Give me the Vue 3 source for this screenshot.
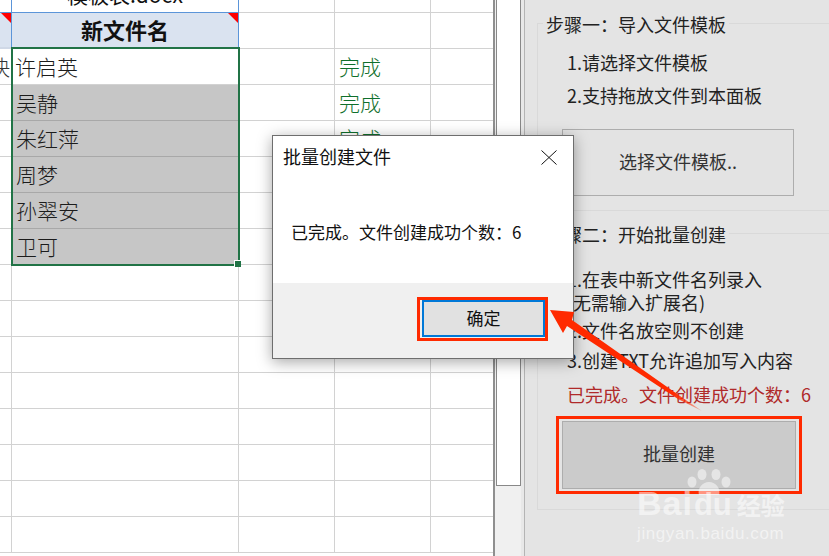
<script setup>
const rows = Array.from({ length: 16 }, (_, i) => i)
const names = { 2: '许启英', 3: '吴静', 4: '朱红萍', 5: '周梦', 6: '孙翠安', 7: '卫可' }
const done = [2, 3, 4, 5, 6, 7]
function rowClass(r) {
  return { first: r === 0, head: r === 1, picked: r >= 3 && r <= 7, last: r === 7 }
}
</script>

<template>
  <div class="screen">
    <div class="sheet">
      <template v-for="r in rows" :key="r">
        <div class="cell c0" :class="rowClass(r)">
          <span v-if="r === 2" class="clipped">快</span>
          <i v-if="r === 1" class="flag"></i>
        </div>
        <div class="cell c1" :class="rowClass(r)">
          <span v-if="r === 0" class="fname">模板表.docx</span>
          <span v-else-if="r === 1" class="title">新文件名</span>
          <span v-else-if="names[r]" class="name">{{ names[r] }}</span>
          <i v-if="r === 1" class="flag"></i>
        </div>
        <div class="cell c2"></div>
        <div class="cell c3"><span v-if="done.includes(r)" class="ok">完成</span></div>
        <div class="cell c4"></div>
      </template>
      <div class="selection"><i class="handle"></i></div>
    </div>

    <div class="scrollbar"><div class="thumb"></div></div>

    <aside class="panel">
      <section class="group one">
        <h3 class="legend">步骤一：导入文件模板</h3>
        <ul class="steps">
          <li>1.请选择文件模板</li>
          <li>2.支持拖放文件到本面板</li>
        </ul>
        <button class="pick">选择文件模板..</button>
      </section>
      <section class="group two">
        <h3 class="legend">步骤二：开始批量创建</h3>
        <p class="wrap">1.在表中新文件名列录入<br />(无需输入扩展名)</p>
        <p class="line l2">2.文件名放空则不创建</p>
        <p class="line">3.创建TXT允许追加写入内容</p>
        <p class="line result">已完成。文件创建成功个数：6</p>
        <div class="mark">
          <button class="create">批量创建</button>
        </div>
      </section>
    </aside>

    <div class="dialog">
      <header class="d-title">
        <span>批量创建文件</span>
        <svg class="close" width="16" height="15" viewBox="0 0 16 15">
          <path d="M0.5 0.5 L15.5 14.5 M15.5 0.5 L0.5 14.5" stroke="#111" stroke-width="1" fill="none" />
        </svg>
      </header>
      <div class="d-body">已完成。文件创建成功个数：6</div>
      <footer class="d-foot">
        <div class="d-mark"><button class="ok-btn">确定</button></div>
      </footer>
    </div>

    <svg class="arrow" width="829" height="556" viewBox="0 0 829 556">
      <defs>
        <linearGradient id="tail" x1="550" y1="310" x2="702" y2="411" gradientUnits="userSpaceOnUse">
          <stop offset="0.82" stop-color="#ff2a00" />
          <stop offset="1" stop-color="#ff2a00" stop-opacity="0.25" />
        </linearGradient>
      </defs>
      <polygon points="550,310 574,312 572,320 680,396 702,411 678,399 567,326 563,333" fill="url(#tail)" />
    </svg>

    <div class="baidu">
      <svg class="paw" width="44" height="26" viewBox="0 0 44 26">
        <g fill="#fff" fill-opacity="0.5">
          <ellipse cx="5" cy="13" rx="4.5" ry="5.5" />
          <ellipse cx="15" cy="5.5" rx="4.5" ry="5.5" />
          <ellipse cx="29" cy="5.5" rx="4.5" ry="5.5" />
          <ellipse cx="39" cy="13" rx="4.5" ry="5.5" />
          <path d="M22 13 C15 13 10 20 12 26 L32 26 C34 20 29 13 22 13 Z" />
        </g>
      </svg>
      <div class="b-main"><span class="bai">Bai</span><span class="du">du</span><span class="jy">经验</span></div>
      <div class="b-url">jingyan.baidu.com</div>
    </div>
  </div>
</template>

<style>
html, body { margin: 0; padding: 0; background: #fff; overflow: hidden; }
</style>

<style scoped>
.screen {
  position: relative;
  display: flex;
  width: 829px;
  height: 556px;
  overflow: hidden;
  font-family: "Noto Sans CJK SC", "Liberation Sans", sans-serif;
  color: #222;
}
.sheet {
  position: relative;
  display: grid;
  grid-template-columns: 12px 227px 96px 96px 62px;
  grid-template-rows: 13px repeat(15, 36px);
  width: 493px;
  height: 556px;
  flex: none;
  overflow: hidden;
}
.cell {
  position: relative;
  display: flex;
  align-items: center;
  overflow: hidden;
  border-right: 1px solid #d2d2d2;
  border-bottom: 1px solid #d2d2d2;
  box-sizing: border-box;
  min-width: 0;
  font-size: 21px;
  font-weight: 300;
  padding-bottom: 2px;
}
.c4 { border-right: none; }
.c0.first, .c1.first { border-right-color: #5b95d9; }
.first { align-items: flex-end; padding-bottom: 0; border-bottom-color: #5b95d9; }
.head {
  background: #dae3f0;
  border-right-color: #5b95d9;
  border-top: 1px solid #5b95d9;
  margin-top: -1px;
  justify-content: center;
  padding-bottom: 4px;
}
.c1.head { border-bottom: none; }
.c0.head { border-bottom: 2px solid #cfd8e6; }
.flag {
  position: absolute;
  top: 0;
  right: 0;
  width: 0;
  height: 0;
  border-top: 10px solid #f00;
  border-left: 10px solid transparent;
}
.fname {
  width: 100%;
  text-align: center;
  font-size: 21px;
  font-weight: 400;
  line-height: 20px;
  margin-bottom: 8px;
  color: #111;
  white-space: nowrap;
}
.title { font-size: 22px; font-weight: 700; color: #111; }
.name { padding-left: 3px; color: #1c1c1c; }
.clipped { margin-left: -11px; color: #333; }
.picked.c1 {
  background: #c6c6c6;
  margin: 0 1px 0 1px;
  border-right: none;
  border-bottom-color: #a8a8a8;
}
.picked.last.c1 {
  margin-bottom: 1px;
  border-bottom: none;
}
.picked.c1 .name { padding-left: 3px; }
.ok { padding-left: 4px; color: #0f6f2c; }
.selection {
  position: absolute;
  left: 11px;
  top: 47px;
  width: 229px;
  height: 219px;
  box-sizing: border-box;
  border: 2px solid #217346;
  pointer-events: none;
}
.handle {
  position: absolute;
  right: -3px;
  bottom: -3px;
  width: 6px;
  height: 6px;
  background: #217346;
  border-left: 1px solid #fff;
  border-top: 1px solid #fff;
}
.scrollbar {
  width: 31px;
  flex: none;
  box-sizing: border-box;
  border-left: 2px solid #8f8f8f;
  border-right: 3px solid #e8e8e8;
  padding-left: 1px;
  background: #f0f0f0;
}
.thumb {
  width: 25px;
  height: 486px;
  box-sizing: border-box;
  border: 1px solid #888;
  border-top: none;
  background: #fff;
}
.panel {
  flex: 1;
  min-width: 0;
  background: #e4e4e4;
  border-left: 1px solid #b4b4b4;
  box-sizing: border-box;
  padding: 23px 0 0 12px;
  font-size: 18px;
  color: #222;
}
.group {
  border: 1px solid #d9d9d9;
  border-right: none;
  box-sizing: border-box;
}
.one { height: 188px; }
.two { height: 277px; margin-top: 22px; }
.legend {
  margin: -13px 0 0 5px;
  padding: 0 3px;
  width: fit-content;
  background: #e4e4e4;
  font-size: 18px;
  font-weight: 400;
  line-height: 26px;
}
.steps {
  list-style: none;
  margin: 9px 0 0;
  padding: 0 0 0 29px;
}
.steps li { line-height: 33px; }
.pick {
  display: block;
  margin: 17px 0 0 24px;
  width: 232px;
  height: 67px;
  background: #e3e3e3;
  border: 1px solid #adadad;
  font: inherit;
  color: #333;
  padding: 0 0 4px;
}
.wrap {
  margin: 21px 0 0;
  padding-left: 29px;
  line-height: 23px;
}
.line {
  margin: 0;
  padding-left: 29px;
  line-height: 30px;
}
.l2 { margin-top: 1px; }
.result { margin-top: 4px; color: #b02a2a; }
.mark {
  margin: 7px 0 0 18px;
  width: 246px;
  height: 78px;
  box-sizing: border-box;
  border: 3px solid #ff2a00;
  padding: 2px 3px;
}
.create {
  display: block;
  width: 100%;
  height: 100%;
  background: #cbcbcb;
  border: 1px solid #adadad;
  font: inherit;
  color: #333;
  padding: 0 0 4px;
}
.dialog {
  position: absolute;
  left: 272px;
  top: 135px;
  width: 302px;
  height: 224px;
  box-sizing: border-box;
  display: flex;
  flex-direction: column;
  background: #fff;
  border: 1px solid #6e6e6e;
  box-shadow: 0 3px 14px rgba(0, 0, 0, 0.35);
  font-size: 18px;
  color: #111;
}
.d-title {
  display: flex;
  align-items: center;
  justify-content: space-between;
  height: 43px;
  padding: 0 16px 3px 10px;
  box-sizing: border-box;
}
.close { margin-top: 3px; }
.d-body {
  flex: 1;
  display: flex;
  align-items: center;
  font-size: 17px;
  padding: 1px 0 0 18px;
}
.d-foot {
  height: 75px;
  flex: none;
  background: #f0f0f0;
  display: flex;
  justify-content: flex-end;
  align-items: flex-start;
  padding: 14px 25px 0 0;
  box-sizing: border-box;
}
.d-mark {
  width: 131px;
  height: 44px;
  box-sizing: border-box;
  border: 3px solid #ff2a00;
  padding: 0 0 1px 2px;
  display: flex;
}
.ok-btn {
  flex: 1;
  background: #e1e1e1;
  border: 2px solid #0078d7;
  font: inherit;
  font-size: 17px;
  color: #111;
  padding: 0 0 2px;
}
.arrow {
  position: absolute;
  left: 0;
  top: 0;
  pointer-events: none;
}
.baidu {
  position: absolute;
  left: 637px;
  top: 469px;
  width: 160px;
  color: rgba(255, 255, 255, 0.55);
  pointer-events: none;
}
.paw { position: absolute; left: 50px; top: 0; }
.b-main {
  display: flex;
  align-items: baseline;
  margin-top: 16px;
  font-family: "Liberation Sans", sans-serif;
  font-weight: 700;
  line-height: 36px;
}
.bai { font-size: 34px; letter-spacing: 1px; }
.du { font-size: 31px; margin-left: 1px; }
.jy {
  font-family: "Noto Sans CJK SC", sans-serif;
  font-size: 24px;
  margin-left: 5px;
}
.b-url {
  font-family: "Liberation Sans", sans-serif;
  font-size: 17px;
  line-height: 20px;
  letter-spacing: 0.6px;
  margin-top: 1px;
}
</style>
